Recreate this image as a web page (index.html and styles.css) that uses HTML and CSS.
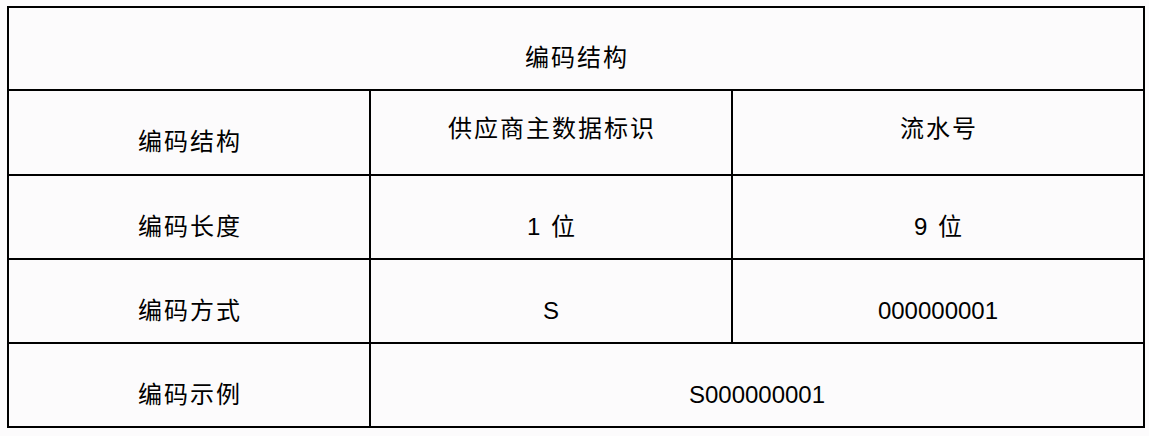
FILE: index.html
```html
<!DOCTYPE html>
<html lang="zh">
<head>
<meta charset="utf-8">
<title>编码结构</title>
<link rel="stylesheet" href="styles.css">
</head>
<body>
<table class="code-table">
  <colgroup>
    <col class="col-label">
    <col class="col-mid">
    <col class="col-right">
  </colgroup>
  <tr class="row row-title">
    <td colspan="3" class="cell">编码结构</td>
  </tr>
  <tr class="row row-head">
    <td class="cell">编码结构</td>
    <td class="cell cell-high">供应商主数据标识</td>
    <td class="cell cell-high">流水号</td>
  </tr>
  <tr class="row">
    <td class="cell">编码长度</td>
    <td class="cell">1 位</td>
    <td class="cell">9 位</td>
  </tr>
  <tr class="row">
    <td class="cell">编码方式</td>
    <td class="cell cell-num">S</td>
    <td class="cell cell-num">000000001</td>
  </tr>
  <tr class="row">
    <td class="cell">编码示例</td>
    <td colspan="2" class="cell cell-num">S000000001</td>
  </tr>
</table>
</body>
</html>
```
FILE: styles.css
```css
html, body {
  margin: 0;
  padding: 0;
  background: #fcfbfc;
}

body {
  padding: 6px 0 0 7px;
  font-family: "Liberation Sans", "Noto Sans CJK SC", sans-serif;
  color: #000;
}

.code-table {
  border-collapse: collapse;
  table-layout: fixed;
  width: 1136px;
  border: 2px solid #000;
}

.col-label { width: 362px; }
.col-mid { width: 362px; }
.col-right { width: 412px; }

.row { height: 84px; }
.row-title { height: 83px; }
.row-head { height: 85px; }

.cell {
  border: 2px solid #000;
  text-align: center;
  vertical-align: middle;
  font-size: 24px;
  line-height: 30px;
  letter-spacing: 2px;
  padding: 19px 0 0 2px;
  font-weight: normal;
}

.cell-high {
  padding: 0 0 8px 2px;
}

.cell-num {
  letter-spacing: 0;
  padding-left: 0;
}
```
